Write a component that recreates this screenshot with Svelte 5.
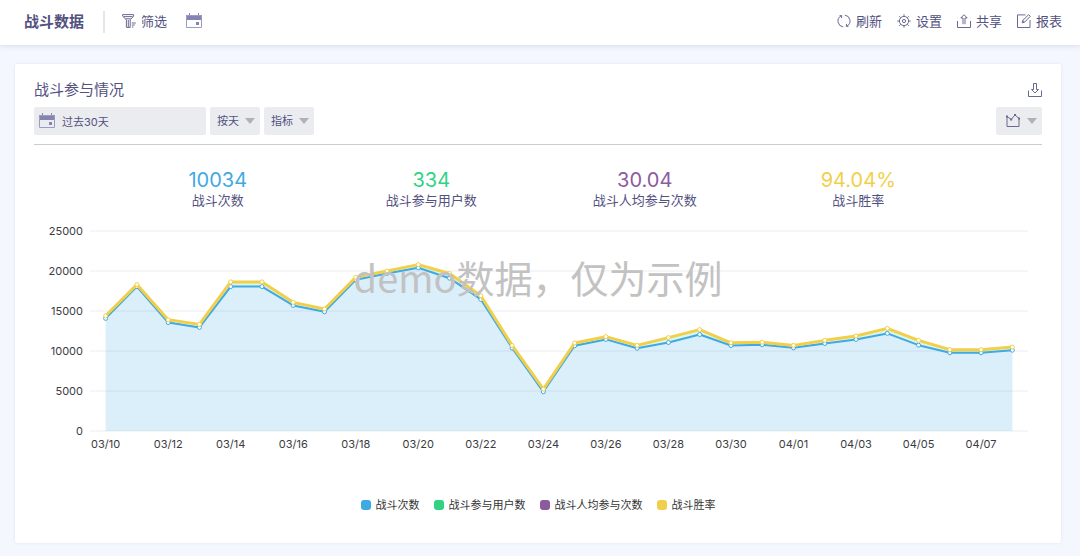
<script>
    const metrics = [
        { name: "战斗次数", value: "10034", tone: "blue" },
        { name: "战斗参与用户数", value: "334", tone: "green" },
        { name: "战斗人均参与次数", value: "30.04", tone: "purple" },
        { name: "战斗胜率", value: "94.04%", tone: "yellow" },
    ];

    const days = [
        "03/10", "03/11", "03/12", "03/13", "03/14", "03/15", "03/16", "03/17",
        "03/18", "03/19", "03/20", "03/21", "03/22", "03/23", "03/24", "03/25",
        "03/26", "03/27", "03/28", "03/29", "03/30", "03/31", "04/01", "04/02",
        "04/03", "04/04", "04/05", "04/06", "04/07", "04/08",
    ];
    const battles = [
        14080, 18050, 13550, 12950, 18050, 18050, 15700, 14900, 18900, 19700,
        20400, 19100, 16450, 10370, 4900, 10650, 11450, 10350, 11060, 12060,
        10680, 10780, 10400, 10930, 11450, 12200, 10730, 9780, 9780, 10100,
    ];
    // 堆叠后的总量
    const totals = [
        14400, 18300, 13900, 13330, 18640, 18640, 16080, 15250, 19200, 20000,
        20800, 19680, 16900, 10700, 5240, 11000, 11790, 10700, 11670, 12670,
        11030, 11100, 10700, 11330, 11880, 12830, 11330, 10170, 10170, 10500,
    ];
    const ticks = [25000, 20000, 15000, 10000, 5000, 0];

    const left = 56;
    const top = 12;
    const plotHeight = 200;

    let range = "过去30天";
    let width = 1008;

    $: right = width - 14;
    $: step = (right - left) / days.length;
    $: x = (i) => left + step * (i + 0.5);
    $: lower = battles.map((v, i) => [x(i), y(v)]);
    $: upper = totals.map((v, i) => [x(i), y(v)]);
    $: lowerArea = [...lower, [x(days.length - 1), y(0)], [x(0), y(0)]];
    $: upperArea = [...upper, ...[...lower].reverse()];

    function y(value) {
        return top + plotHeight * (1 - value / 25000);
    }

    function points(list) {
        return list.map((p) => p.join(",")).join(" ");
    }
</script>

<header>
    <h1>战斗数据</h1>
    <div class="tools">
        <button type="button">
            <svg width="14" height="14" viewBox="0 0 14 14">
                <path d="M.6.6h11v1.6L8.2 5.8v7.6H4.4V5.8L.6 2.2zM1.6 2.6h9M3.6 4.8h5M6.3 6v7M9.8 9h4M9.8 11h3M9.8 13h1.6" />
            </svg>
            筛选
        </button>
        <button type="button" aria-label="日期">
            <svg class="calendar" width="16" height="16" viewBox="0 0 16 16">
                <path class="solid" d="M0 2h16v5H0zM3 0h1v4H3zM12 0h1v4h-1zM10 9h3v3h-3z" />
                <path d="M.5 2.5h15v12H.5z" />
            </svg>
        </button>
    </div>
    <nav>
        <button type="button">
            <svg width="14" height="14" viewBox="0 0 14 14">
                <path d="M6.2 12.9A5.9 5.9 0 0 1 4 1.9M7.8 1.1a5.9 5.9 0 0 1 2.2 11M2.6 1.6l2.2.1-.4 2.4M11.4 12.4l-2.2-.1.4-2.4" />
            </svg>
            刷新
        </button>
        <button type="button">
            <svg width="14" height="14" viewBox="0 0 14 14">
                <circle cx="7" cy="7" r="4.6" />
                <circle cx="7" cy="7" r="1.6" />
                <path d="M7 .3v2M7 11.7v2M.3 7h2M11.7 7h2M2.3 2.3l1.4 1.4M10.3 10.3l1.4 1.4M2.3 11.7l1.4-1.4M10.3 3.7l1.4-1.4" />
            </svg>
            设置
        </button>
        <button type="button">
            <svg width="14" height="14" viewBox="0 0 14 14">
                <path d="M.5 7v6.5h13V7M6 10.2V4H3.8L7 .7 10.2 4H8v6.2" />
            </svg>
            共享
        </button>
        <button type="button">
            <svg width="14" height="14" viewBox="0 0 14 14">
                <path d="M8.5.9h-8v12.6h12.5V6M5.2 8.9l.5-2.4L11.6.7l1.7 1.6-5.8 5.9zM5.7 6.5l1.8 1.7" />
            </svg>
            报表
        </button>
    </nav>
</header>

<main>
    <section class="card">
        <div class="card-head">
            <h2>战斗参与情况</h2>
            <button type="button" aria-label="下载">
                <svg width="14" height="14" viewBox="0 0 14 14">
                    <path d="M.5 7.5v6h13v-6M5.5.5h3v6h2L7 10 3.5 6.5h2z" />
                </svg>
            </button>
        </div>

        <div class="filters">
            <label class="field date">
                <svg class="calendar" width="16" height="16" viewBox="0 0 16 16">
                    <path class="solid" d="M0 2h16v5H0zM3 0h1v4H3zM12 0h1v4h-1zM10 9h3v3h-3z" />
                    <path d="M.5 2.5h15v12H.5z" />
                </svg>
                <input type="text" aria-label="时间范围" bind:value={range} readonly />
            </label>
            <label class="field">
                <select aria-label="时间粒度"><option>按天</option></select>
                <span class="arrow"></span>
            </label>
            <label class="field">
                <select aria-label="指标"><option>指标</option></select>
                <span class="arrow"></span>
            </label>
            <button type="button" class="field chart-type" aria-label="图表类型" aria-haspopup="listbox">
                <svg width="14" height="14" viewBox="0 0 14 14">
                    <path d="M1 2.5v10h12v-8L9 1 5.2 5.5z" />
                    <path class="solid" d="M0 1.5h2v2H0zM4.2 4.5h2v2h-2zM8 0h2v2H8zM12 3.5h2v2h-2z" />
                </svg>
                <span class="arrow"></span>
            </button>
        </div>

        <div class="metrics">
            {#each metrics as metric}
                <div class="metric">
                    <strong class={metric.tone}>{metric.value}</strong>
                    <span>{metric.name}</span>
                </div>
            {/each}
        </div>

        <div class="chart" bind:clientWidth={width}>
            <svg {width} height="240" role="img" aria-label="战斗参与情况">
                {#each ticks as tick}
                    <line class="grid" x1={left} x2={right} y1={y(tick)} y2={y(tick)} />
                    <text x={left - 7} y={y(tick) + 4} text-anchor="end">{tick}</text>
                {/each}
                {#each days as day, i}
                    {#if i % 2 === 0}
                        <text x={x(i)} y="229" text-anchor="middle">{day}</text>
                    {/if}
                {/each}

                <polygon class="area blue" points={points(lowerArea)} />
                <polygon class="area green" points={points(upperArea)} />
                <polyline class="series blue" points={points(lower)} />
                {#each lower as [cx, cy]}
                    <circle class="blue" {cx} {cy} r="2" />
                {/each}
                <polyline class="series top yellow" points={points(upper)} />
                {#each upper as [cx, cy]}
                    <circle class="yellow" {cx} {cy} r="2" />
                {/each}
            </svg>
            <p class="watermark">demo数据，仅为示例</p>
        </div>

        <ul class="legend">
            {#each metrics as metric}
                <li><i class={metric.tone}></i>{metric.name}</li>
            {/each}
        </ul>
    </section>
</main>

<style>
    :global(body) {
        background: #f4f7fe;
        color: #525180;
        font-family: Inter, "Noto Sans CJK SC", sans-serif;
        font-size: 13px;
    }

    h1,
    h2,
    p,
    ul {
        margin: 0;
        padding: 0;
    }

    .blue {
        --tone: #3fa9e4;
    }

    .green {
        --tone: #30d384;
    }

    .purple {
        --tone: #8b5b9e;
    }

    .yellow {
        --tone: #f2cf4a;
    }

    header {
        display: flex;
        align-items: center;
        height: 45px;
        padding: 0 18px 2px 24px;
        box-sizing: border-box;
        background: #fff;
        box-shadow: 0 1px 6px rgba(60, 70, 110, 0.15);
    }

    h1 {
        font-size: 15px;
        font-weight: 700;
        line-height: 20px;
    }

    button {
        display: flex;
        align-items: center;
        gap: 5px;
        border: 0;
        padding: 0;
        background: none;
        color: inherit;
        font: inherit;
        line-height: 20px;
        cursor: pointer;
    }

    header button {
        padding-bottom: 2px;
    }

    button svg,
    .calendar {
        flex: none;
        fill: none;
        stroke: #6a6992;
        stroke-width: 1;
    }

    .solid {
        fill: #6a6992;
        stroke: none;
    }

    .calendar {
        stroke: #9c9bc0;
    }

    .calendar .solid {
        fill: #8483b2;
    }

    .tools {
        display: flex;
        gap: 19px;
        margin-left: 19px;
        padding-left: 17px;
        border-left: 2px solid #e6e6ea;
    }

    nav {
        display: flex;
        gap: 15px;
        margin-left: auto;
    }

    main {
        padding: 19px 19px 12px 15px;
    }

    .card {
        padding: 16px 19px 30px;
        border-radius: 2px;
        background: #fff;
        box-shadow: 0 0 3px rgba(80, 90, 160, 0.12);
    }

    .card-head {
        display: flex;
        align-items: center;
        justify-content: space-between;
        height: 20px;
    }

    h2 {
        font-size: 15px;
        font-weight: 400;
        line-height: 20px;
    }

    .filters {
        display: flex;
        gap: 4px;
        margin-top: 7px;
        padding-bottom: 9px;
        border-bottom: 1px solid #ccc;
        font-size: 11px;
    }

    .field {
        display: flex;
        align-items: center;
        justify-content: space-between;
        width: 50px;
        height: 28px;
        padding: 0 5px 0 7px;
        box-sizing: border-box;
        border-radius: 2px;
        background: #ebecf0;
    }

    .date {
        gap: 7px;
        width: 172px;
        padding-left: 5px;
    }

    .chart-type {
        width: 46px;
        margin-left: auto;
        padding-left: 10px;
    }

    input,
    select {
        appearance: none;
        min-width: 0;
        border: 0;
        padding: 0;
        background: none;
        color: inherit;
        font: inherit;
        outline: none;
    }

    input {
        flex: 1;
    }

    .arrow {
        border: 5px solid transparent;
        border-top: 6px solid #b1b1b5;
        border-bottom: 0;
    }

    .metrics {
        display: grid;
        grid-template-columns: repeat(4, 1fr);
        margin-top: 25px;
        padding: 0 77px;
    }

    .metric {
        display: flex;
        flex-direction: column;
        align-items: center;
        line-height: 20px;
        white-space: nowrap;
    }

    .metric strong {
        color: var(--tone);
        font-size: 20px;
        font-weight: 400;
    }

    .chart {
        position: relative;
        height: 240px;
        margin-top: 9px;
        overflow: hidden;
    }

    .chart svg {
        display: block;
    }

    .chart text {
        fill: #3c3c40;
        font-size: 11px;
    }

    .grid {
        stroke: #ededf0;
    }

    .area {
        fill: var(--tone);
        fill-opacity: 0.19;
    }

    .series {
        fill: none;
        stroke: var(--tone);
        stroke-width: 2;
        stroke-linejoin: bevel;
    }

    .series.top {
        stroke-width: 3;
    }

    circle[class] {
        fill: #fff;
        stroke: var(--tone);
    }

    .watermark {
        position: absolute;
        inset: 30px 0 auto;
        color: #c2c2c2;
        font-family: "Noto Sans CJK SC", sans-serif;
        font-size: 38px;
        line-height: 56px;
        text-align: center;
        pointer-events: none;
    }

    .legend {
        display: flex;
        justify-content: center;
        gap: 14px;
        margin-top: 38px;
        color: #333;
        font-size: 11px;
        line-height: 16px;
        list-style: none;
    }

    .legend li {
        display: flex;
        align-items: center;
        gap: 5px;
    }

    .legend i {
        width: 10px;
        height: 10px;
        border-radius: 3px;
        background: var(--tone);
    }
</style>
